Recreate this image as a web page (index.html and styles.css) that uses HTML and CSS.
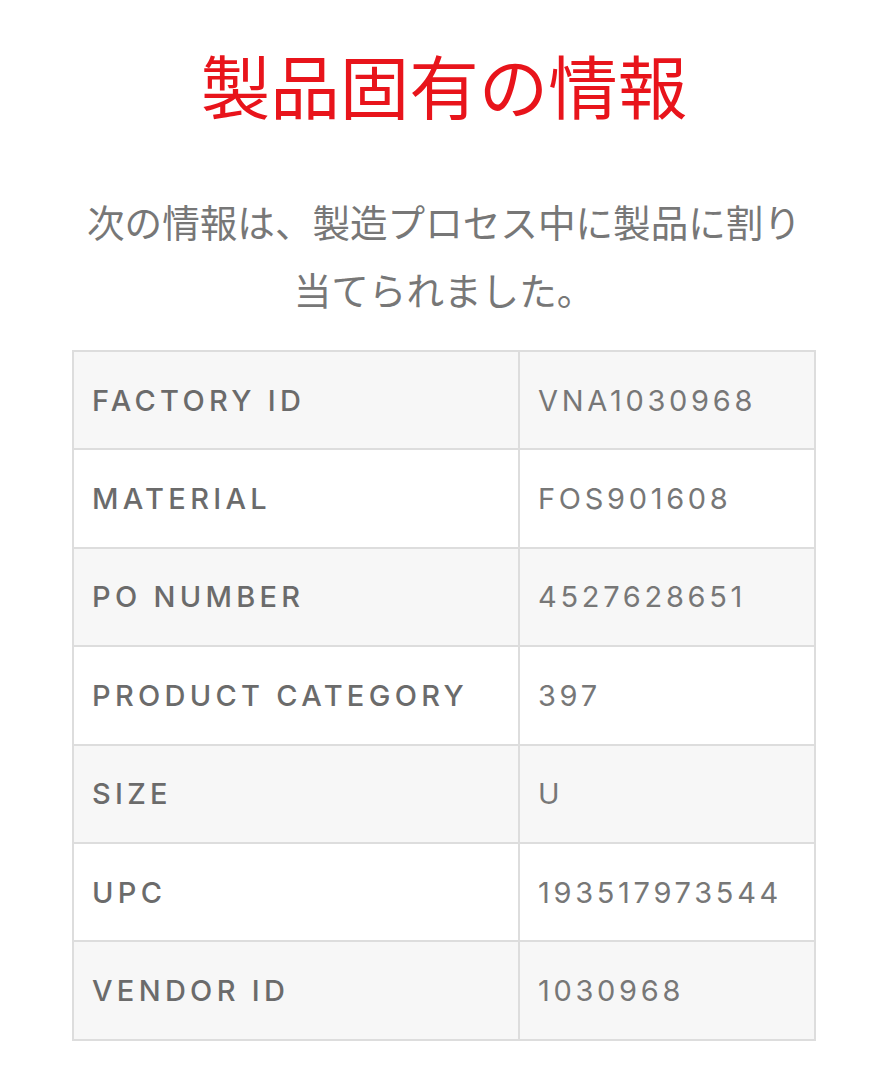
FILE: index.html
```html
<!DOCTYPE html>
<html lang="ja">
<head>
<meta charset="utf-8">
<title>製品固有の情報</title>
<link rel="stylesheet" href="styles.css">
</head>
<body>
<main class="page">
  <h1 class="title">製品固有の情報</h1>
  <p class="lead">次の情報は、製造プロセス中に製品に割り当てられました。</p>
  <table class="spec">
    <tbody>
      <tr><th>FACTORY ID</th><td>VNA1030968</td></tr>
      <tr><th>MATERIAL</th><td>FOS901608</td></tr>
      <tr><th>PO NUMBER</th><td>4527628651</td></tr>
      <tr><th>PRODUCT CATEGORY</th><td>397</td></tr>
      <tr><th>SIZE</th><td>U</td></tr>
      <tr><th>UPC</th><td>193517973544</td></tr>
      <tr><th>VENDOR ID</th><td>1030968</td></tr>
    </tbody>
  </table>
</main>
</body>
</html>
```
FILE: styles.css
```css
html, body {
  margin: 0;
  padding: 0;
  background: #ffffff;
}

.page {
  width: 744px;
  margin: 0 auto;
  padding-top: 42px;
  font-family: "Inter", "Noto Sans CJK JP", sans-serif;
}

.title {
  margin: 0;
  font-family: "Noto Sans CJK JP", sans-serif;
  font-weight: 400;
  font-size: 69.5px;
  line-height: 84px;
  color: #e8141b;
  text-align: center;
}

.lead {
  margin: 61px 0 0;
  font-family: "Noto Sans CJK JP", sans-serif;
  font-size: 37.6px;
  line-height: 68px;
  color: #777777;
  text-align: center;
}

.spec {
  margin-top: 27px;
  width: 744px;
  border-collapse: collapse;
  border: 2px solid #dddddd;
  table-layout: fixed;
}

.spec th,
.spec td {
  border: 2px solid #dddddd;
  height: 96.4px;
  padding: 0 18px;
  text-align: left;
  vertical-align: middle;
  font-size: 29px;
  white-space: nowrap;
}

.spec th {
  width: 408px;
  font-weight: 500;
  letter-spacing: 4.3px;
  color: #6b6b6b;
}

.spec td {
  font-weight: 400;
  letter-spacing: 3.7px;
  color: #777777;
}

.spec tr:nth-child(odd) {
  background: #f7f7f7;
}
```
